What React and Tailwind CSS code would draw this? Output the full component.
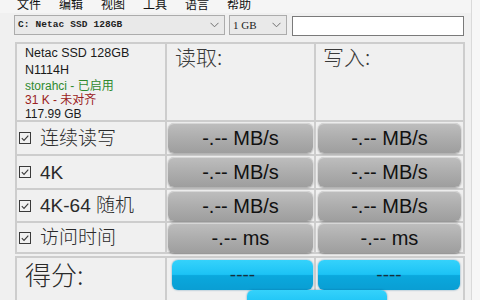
import React from "react";

const CJK = "font-['Noto_Sans_CJK_SC',sans-serif]";
const LAT = "font-['Liberation_Sans','Noto_Sans_CJK_SC',sans-serif]";

function Chevron() {
  return (
    <svg width="9" height="6" viewBox="0 0 9 6" className="shrink-0">
      <polyline points="0.5,0.8 4.5,4.8 8.5,0.8" fill="none" stroke="#6f6f6f" strokeWidth="1" />
    </svg>
  );
}

function Check() {
  return (
    <svg width="12" height="12" viewBox="0 0 12 12" className="shrink-0">
      <rect x="0.5" y="0.5" width="11" height="11" fill="none" stroke="#3a3a3a" strokeWidth="1" />
      <polyline points="2.8,6.2 5,8.4 9.3,3.6" fill="none" stroke="#3a3a3a" strokeWidth="1.1" />
    </svg>
  );
}

function GrayBtn({ text, className = "" }) {
  return (
    <div
      className={`h-[30px] rounded-[6px] bg-linear-to-b from-[#bebebe] via-[#adadad] to-[#9e9e9e] shadow-[inset_0_1px_0_#d6d6d6,0_1px_2px_rgba(0,0,0,0.35)] flex items-center justify-center text-[20px] text-[#111] ${LAT} ${className}`}
    >
      {text}
    </div>
  );
}

function BlueBtn({ className = "" }) {
  return (
    <div
      className={`h-[30px] rounded-[6px] bg-[linear-gradient(to_bottom,#35d2fb_0%,#1cc3f5_48%,#0aa8dd_52%,#0a9ed3_100%)] shadow-[0_0_2px_rgba(0,90,140,0.6)] flex items-center justify-center text-[19px] text-[#16303c] ${LAT} ${className}`}
    >
      ----
    </div>
  );
}

function Label({ children }) {
  return (
    <div className="bg-[#f0f0f0] flex items-center pl-[2px] gap-[9px]">
      <Check />
      <span className={`text-[19px] leading-none text-[#2a2a2a] font-light ${LAT}`}>{children}</span>
    </div>
  );
}

function Cell({ children, className = "" }) {
  return <div className={`bg-[#f0f0f0] ${className}`}>{children}</div>;
}

export default function App() {
  const menus = ["文件", "编辑", "视图", "工具", "语言", "帮助"];
  return (
    <div className="flex w-[480px] h-[300px] overflow-hidden bg-[#f0f0f0]">
      <div className="flex-1 min-w-0 flex flex-col">
        {/* menu bar */}
        <div className={`shrink-0 h-[13px] overflow-hidden bg-[#f5f5f5] flex pl-[17px] gap-[18px] text-[12px] leading-[12px] text-[#111] ${CJK}`}>
          {menus.map((m) => (
            <div key={m} className="-mt-[2px] whitespace-nowrap">{m}</div>
          ))}
        </div>

        {/* toolbar */}
        <div className="shrink-0 flex pl-[14px] mt-[2px] gap-[4px] items-start">
          <div className="w-[211px] h-[20px] border border-[#acacac] bg-[#e9e9e9] flex items-center justify-between pl-[3px] pr-[5px]">
            <span className="font-['Liberation_Mono',monospace] text-[9.5px] font-bold text-[#222] tracking-[0.1px]">C: Netac SSD 128GB</span>
            <Chevron />
          </div>
          <div className="w-[58px] h-[20px] border border-[#acacac] bg-[#e9e9e9] flex items-center justify-between pl-[3px] pr-[5px]">
            <span className="font-['Liberation_Serif',serif] text-[11px] text-[#222]">1 GB</span>
            <Chevron />
          </div>
          <div className="w-[172px] h-[20px] mt-[1px] ml-[1px] border border-[#7a7a7a] bg-white" />
        </div>

        {/* main table */}
        <div className="shrink-0 ml-[15px] mt-[6px] w-[450px] bg-[#cdcdcd] p-[2px] grid grid-cols-[148px_147px_147px] grid-rows-[76px_32px_32px_31px_29px] gap-[2px]">
          <Cell className={`pl-[8px] pt-[1px] ${LAT} text-[12.5px] text-[#1a1a1a]`}>
            <div className="leading-[17px]">Netac SSD 128GB</div>
            <div className="leading-[17px]">N1114H</div>
            <div className="leading-[14px] text-[12px] text-[#2f8a2f]">storahci - 已启用</div>
            <div className="leading-[14px] text-[12px] text-[#9a2020]">31 K - 未对齐</div>
            <div className="leading-[14px] text-[12px]">117.99 GB</div>
          </Cell>
          <Cell className={`pl-[8px] pt-[1px] text-[21px] leading-[22px] text-[#3a3a3a] font-light ${CJK}`}>读取:</Cell>
          <Cell className={`pl-[7px] pt-[1px] text-[21px] leading-[22px] text-[#3a3a3a] font-light ${CJK}`}>写入:</Cell>

          <Label>连续读写</Label>
          <Cell className="px-[1px] flex items-center"><GrayBtn text="-.-- MB/s" className="w-full" /></Cell>
          <Cell className="px-[2px] flex items-center"><GrayBtn text="-.-- MB/s" className="w-full" /></Cell>

          <Label>4K</Label>
          <Cell className="px-[1px] flex items-center"><GrayBtn text="-.-- MB/s" className="w-full" /></Cell>
          <Cell className="px-[2px] flex items-center"><GrayBtn text="-.-- MB/s" className="w-full" /></Cell>

          <Label>4K-64 随机</Label>
          <Cell className="px-[1px] flex items-center"><GrayBtn text="-.-- MB/s" className="w-full" /></Cell>
          <Cell className="px-[2px] flex items-center"><GrayBtn text="-.-- MB/s" className="w-full" /></Cell>

          <Label>访问时间</Label>
          <Cell className="px-[1px] flex items-center"><GrayBtn text="-.-- ms" className="w-full" /></Cell>
          <Cell className="px-[2px] flex items-center"><GrayBtn text="-.-- ms" className="w-full" /></Cell>
        </div>

        {/* score box */}
        <div className="shrink-0 ml-[15px] mt-[2px] w-[450px] bg-[#cdcdcd] pt-[2px] px-[2px] flex gap-[2px] h-[60px]">
          <Cell className={`w-[148px] pl-[8px] pt-[1px] text-[26px] leading-[30px] text-[#2a2a2a] font-light ${CJK}`}>得分:</Cell>
          <Cell className="w-[296px] flex flex-col">
            <div className="flex h-[34px]">
              <div className="w-[147px] pl-[5px] pt-[2px]"><BlueBtn className="w-[141px]" /></div>
              <div className="w-[2px] bg-[#cdcdcd]" />
              <div className="w-[147px] pl-[2px] pt-[2px]"><BlueBtn className="w-[142px]" /></div>
            </div>
            <div className="pl-[80px]"><BlueBtn className="w-[140px]" /></div>
          </Cell>
        </div>
      </div>
      <div className="w-[9px] shrink-0 border-l border-[#dadada] bg-[#f7f7f7]" />
    </div>
  );
}
